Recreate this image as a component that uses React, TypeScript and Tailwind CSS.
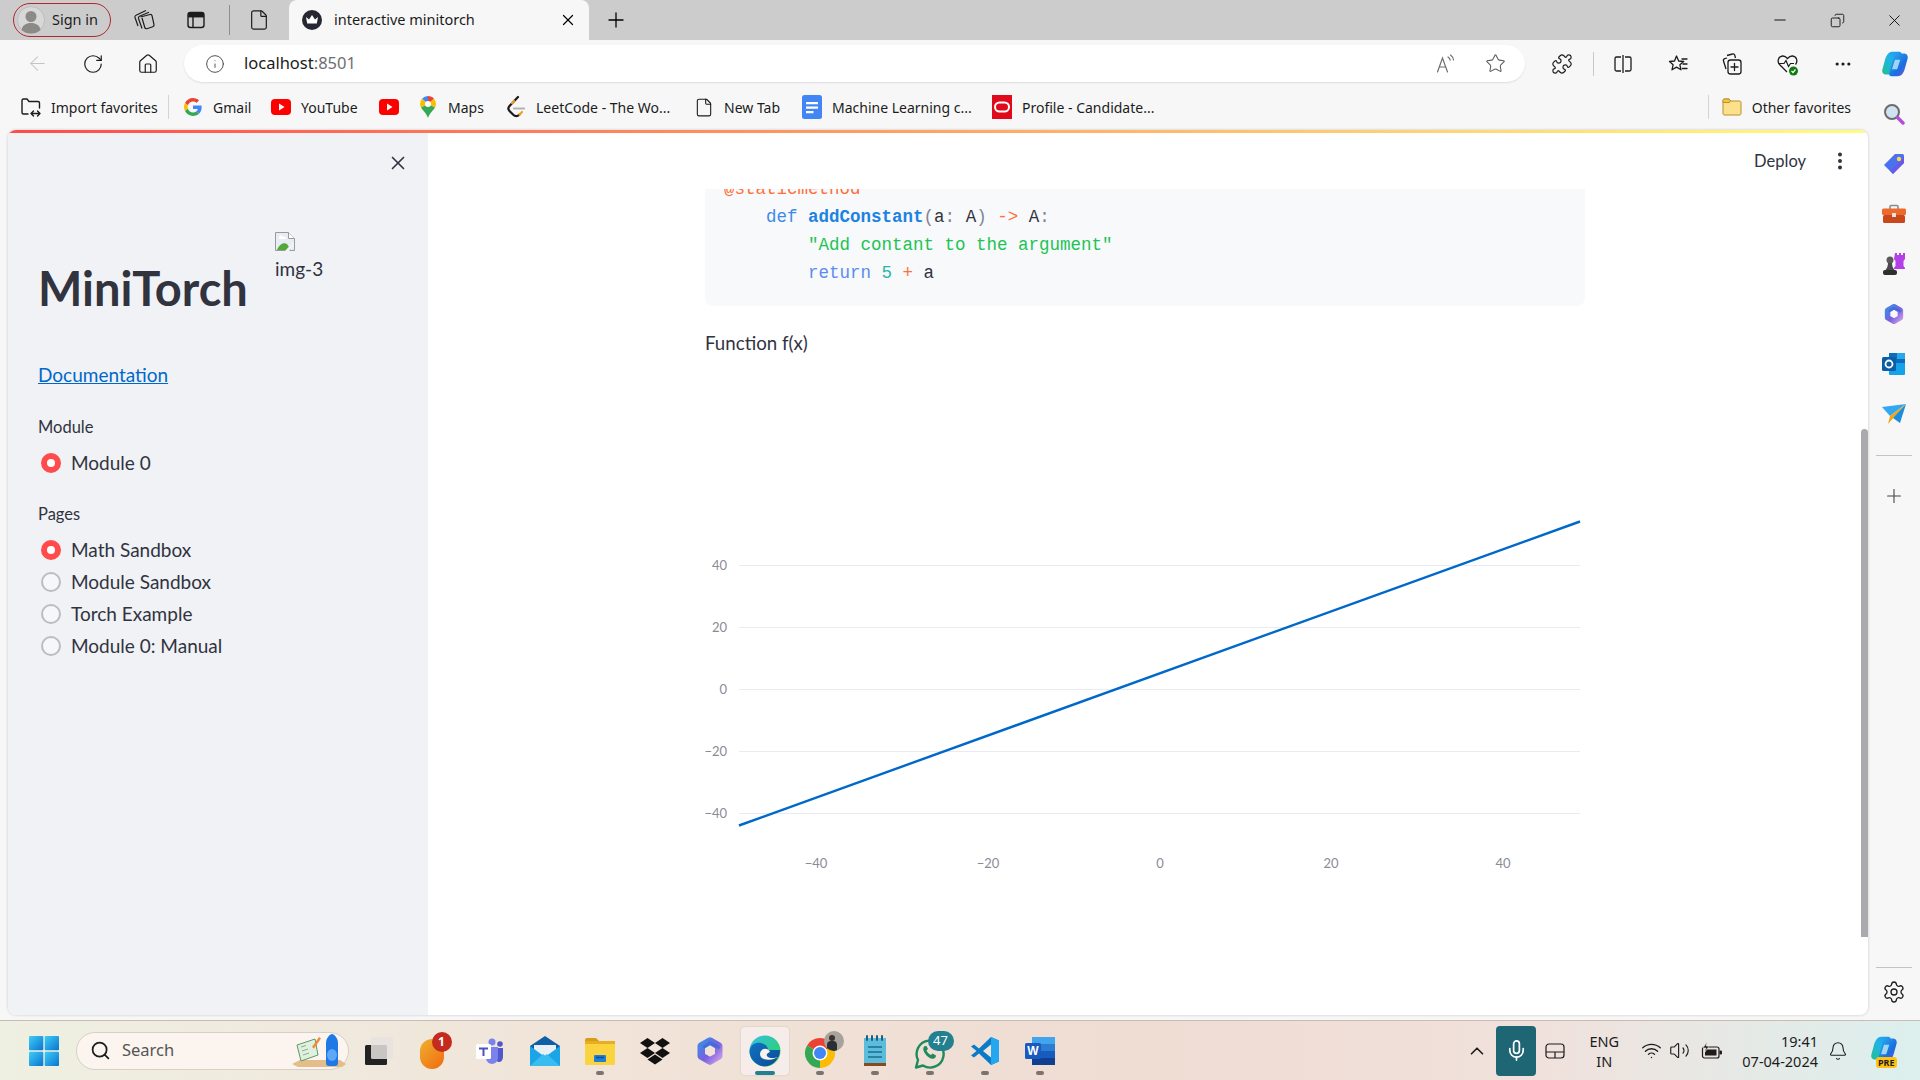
import {
  ArrowLeft,
  Bell,
  ChevronUp,
  Copy,
  Ellipsis,
  EllipsisVertical,
  File,
  Home,
  Info,
  Mic,
  Minus,
  Plus,
  Puzzle,
  RotateCw,
  Search,
  Settings,
  Star,
  Volume2,
  Wifi,
  X,
} from "lucide-react";

// ---- small logos, drawn by hand ----
function Google() {
  return (
    <svg width="18" height="18" viewBox="0 0 48 48">
      <path fill="#EA4335" d="M24 9.5c3.5 0 6.7 1.2 9.2 3.6l6.9-6.9C35.9 2.4 30.5 0 24 0 14.6 0 6.5 5.4 2.6 13.2l8 6.2C12.5 13.7 17.800 9.500 24 9.500z" />
      <path fill="#4285F4" d="M47 24.500c0-1.600-.1-3.100-.4-4.500H24v9h12.900c-.6 3-2.200 5.500-4.700 7.200l7.700 6c4.500-4.200 7.100-10.300 7.100-17.700z" />
      <path fill="#FBBC05" d="M10.500 28.600c-.5-1.500-.8-3-.8-4.600s.3-3.100.8-4.600l-8-6.200C.9 16.500 0 20.100 0 24s.9 7.500 2.600 10.800l7.900-6.200z" />
      <path fill="#34A853" d="M24 48c6.500 0 11.900-2.100 15.900-5.800l-7.700-6c-2.100 1.400-4.900 2.300-8.200 2.300-6.200 0-11.500-4.200-13.400-9.900l-8 6.200C6.500 42.600 14.600 48 24 48z" />
    </svg>
  );
}

function YouTube() {
  return (
    <svg width="20" height="16" viewBox="0 0 20 16">
      <rect width="20" height="16" rx="4" fill="#f00" />
      <path d="M8 4.500 13.500 8 8 11.500z" fill="#fff" />
    </svg>
  );
}

function MapsPin() {
  return (
    <svg width="16" height="22" viewBox="0 0 16 22">
      <path d="M8 0a8 8 0 0 0-6 2.700L8 8z" fill="#4285F4" />
      <path d="M8 0c2.400 0 4.600 1.100 6 2.700L8 8z" fill="#EA4335" />
      <path d="M14 2.700A8 8 0 0 1 16 8c0 1.400-.5 2.600-1 3.600L8 8z" fill="#FBBC05" />
      <path d="M2 2.700A8 8 0 0 0 0 8c0 1.400.5 2.600 1 3.600L8 8z" fill="#FBBC05" />
      <path d="M1 11.600c1.600 3 5.500 5.500 7 10.400 1.500-4.900 5.400-7.400 7-10.400L8 8z" fill="#34A853" />
      <circle cx="8" cy="8" r="3" fill="#fff" />
    </svg>
  );
}

function LeetCode() {
  return (
    <svg width="20" height="24" viewBox="0 0 20 24" fill="none">
      <path d="M12 2 3.500 11c-1.500 1.700-1.500 3.500 0 5l3.500 3.500c2 2 4.500 2 6.500 0" stroke="#1a1a1a" strokeWidth="2.200" strokeLinecap="round" />
      <path d="M8 13.500h10" stroke="#b3b3b3" strokeWidth="2.200" strokeLinecap="round" />
      <path d="M13.500 19.500 16 17M6 8l2-2" stroke="#f89f1b" strokeWidth="2.200" strokeLinecap="round" />
    </svg>
  );
}

function Docs() {
  return (
    <svg width="20" height="24" viewBox="0 0 20 24">
      <rect width="20" height="24" rx="2.500" fill="#4285F4" />
      <path d="M4 7h12v2.200H4zM4 11.500h12v2.200H4zM4 16h7.500v2.200H4z" fill="#fff" />
    </svg>
  );
}

function Oracle() {
  return (
    <svg width="20" height="24" viewBox="0 0 20 24">
      <rect width="20" height="24" fill="#df0a1c" />
      <rect x="3" y="7.500" width="14" height="9" rx="4.500" fill="none" stroke="#fff" strokeWidth="2" />
    </svg>
  );
}

function FolderYellow({ size = 20 }: { size?: number }) {
  return (
    <svg width={size} height={size} viewBox="0 0 20 20">
      <path d="M1 3.500A1.500 1.500 0 0 1 2.500 2H7l2 2h8.500A1.500 1.500 0 0 1 19 5.500v11a1.500 1.500 0 0 1-1.500 1.500h-15A1.500 1.500 0 0 1 1 16.500z" fill="#fde08a" stroke="#b8912d" strokeWidth="1" />
      <path d="M1 3.500A1.500 1.500 0 0 1 2.500 2H7l1.500 2-1 1.500H1z" fill="#f2c744" stroke="#b8912d" strokeWidth="1" />
    </svg>
  );
}

function ImportFav() {
  return (
    <svg width="22" height="22" viewBox="0 0 22 22" fill="none" stroke="#1c1c1c" strokeWidth="1.400" strokeLinecap="round" strokeLinejoin="round">
      <path d="M8 18H3.500A1.500 1.500 0 0 1 2 16.500v-12A1.500 1.500 0 0 1 3.500 3H7l2 2.500h9A1.500 1.500 0 0 1 19.500 7v5" />
      <path d="M11 17.500h9M13.500 15 11 17.500l2.500 2.500M17.500 15l2.500 2.500-2.500 2.500" />
    </svg>
  );
}

function Copilot({ id, size = 28 }: { id: string; size?: number }) {
  return (
    <svg width={size} height={size} viewBox="0 0 32 32">
      <defs>
        <linearGradient id={`${id}a`} x1="0" y1="1" x2="1" y2="0">
          <stop offset="0" stopColor="#1fbf8f" />
          <stop offset="0.55" stopColor="#21b4e8" />
          <stop offset="1" stopColor="#1e90f0" />
        </linearGradient>
        <linearGradient id={`${id}b`} x1="0" y1="0" x2="1" y2="1">
          <stop offset="0" stopColor="#2ab5f2" />
          <stop offset="0.6" stopColor="#1a6fe0" />
          <stop offset="1" stopColor="#7a4fe0" />
        </linearGradient>
      </defs>
      <path d="M13 2h8c2 0 2.800 1.500 2.300 3.500L19 22c-.8 3-3 6-6 6H6c-3.500 0-5-2.500-4.500-5.500l2.500-9C5.500 7 8 2 13 2z" fill={`url(#${id}a)`} />
      <path d="M19 4h7c3.500 0 5 2.500 4.500 5.500l-2.500 9c-1.500 6.500-4 11.500-9 11.500h-7c-2 0-3-1.500-2.500-3.500L14 10c.8-3 2-6 5-6z" fill={`url(#${id}b)`} />
      <path d="M16 11h6l-3.500 11h-6z" fill="#c8f2fa" opacity="0.75" />
    </svg>
  );
}

function SplitScreen() {
  return (
    <svg width="20" height="20" viewBox="0 0 20 20" fill="none" stroke="#1c1c1c" strokeWidth="1.300">
      <path d="M8 3H3.500A1.500 1.500 0 0 0 2 4.500v11A1.500 1.500 0 0 0 3.500 17H8M12 3h4.500A1.500 1.500 0 0 1 18 4.500v11a1.500 1.500 0 0 1-1.500 1.500H12M10 1v18" />
    </svg>
  );
}

function FavStar() {
  return (
    <svg width="22" height="22" viewBox="0 0 22 22" fill="none" stroke="#1c1c1c" strokeWidth="1.300" strokeLinejoin="round">
      <path d="M9.500 3 11.700 8l5 .5-3.800 3.300 1.100 5-4.500-2.700-4.500 2.700 1.100-5L2.500 8.500l5-.5z" />
      <path d="M15 6h5M16 11h4M15.500 15.500H20" strokeLinecap="round" />
    </svg>
  );
}

function CollectionsIcon() {
  return (
    <svg width="22" height="24" viewBox="0 0 22 24" fill="none" stroke="#1c1c1c" strokeWidth="1.300" strokeLinejoin="round">
      <path d="M6 3.500 11.500 2c1-.3 2 .3 2.300 1.300L14.500 6M5 17 2.500 9c-.3-1 .3-2 1.300-2.300L6 6" />
      <rect x="7" y="8" width="13" height="14" rx="2.500" />
      <path d="M13.500 11.500v7M10 15h7" strokeLinecap="round" />
    </svg>
  );
}

function HealthHeart() {
  return (
    <svg width="24" height="24" viewBox="0 0 24 24" fill="none">
      <path d="M11 20 3.500 12.500C1 9.500 2 4.500 6.500 4c2-.2 3.500.8 5 2.500C13 4.800 14.500 3.800 16.500 4c4.500.5 5.500 5.500 3 8.500" stroke="#1c1c1c" strokeWidth="1.300" />
      <path d="M2.500 11.500H8l2-3 2.500 6 2-3H18" stroke="#1c1c1c" strokeWidth="1.200" />
      <circle cx="17.500" cy="19" r="4.500" fill="#107c10" />
      <path d="m15.500 19 1.500 1.500 2.500-3" stroke="#fff" strokeWidth="1.200" />
    </svg>
  );
}

function ReadAloud() {
  return (
    <svg width="22" height="22" viewBox="0 0 22 22" fill="none" stroke="#6f6f6f" strokeWidth="1.200" strokeLinecap="round">
      <path d="m2.500 19 5-14 5 14M4.500 14h6" />
      <path d="M13 4c1.500 1 2 2 2.200 3.200M15.500 2c2 1.500 2.800 3 3 5" />
    </svg>
  );
}

function Crown() {
  return (
    <svg width="20" height="20" viewBox="0 0 20 20">
      <circle cx="10" cy="10" r="10" fill="#262730" />
      <path d="m4 7 3 2.500L10 5l3 4.500L16 7l-1.200 6.500H5.200z" fill="#fff" />
    </svg>
  );
}

function Avatar() {
  return (
    <svg width="28" height="28" viewBox="0 0 28 28">
      <circle cx="14" cy="14" r="13.500" fill="#d8d8d8" stroke="#bdbdbd" />
      <circle cx="14" cy="10.500" r="5.500" fill="#8c8a87" />
      <path d="M4.500 24c1-5 4.500-7 9.500-7s8.500 2 9.500 7c-2.500 2.500-6 3.500-9.500 3.500S7 26.500 4.500 24z" fill="#8c8a87" />
    </svg>
  );
}

function Workspaces() {
  return (
    <svg width="24" height="24" viewBox="0 0 24 24" fill="none" stroke="#1c1c1c" strokeWidth="1.200" strokeLinejoin="round">
      <path d="M9.500 9 19 6.500c1-.2 1.800.3 2 1.200l2 9c.2 1-.3 1.800-1.200 2l-6 2c-1 .2-1.800-.3-2-1.200L11 10" transform="translate(-1 0)" />
      <path d="M6 18 3 9.500c-.3-1 .1-1.800 1-2.200l10-4.800" />
      <path d="M10 20.500 6.500 10.500c-.3-1 .1-1.800 1-2.200l9.500-4" />
    </svg>
  );
}

function TabLayout() {
  return (
    <svg width="20" height="20" viewBox="0 0 20 20" fill="none" stroke="#1c1c1c" strokeWidth="1.400">
      <rect x="2" y="2.500" width="16" height="15" rx="2.500" />
      <path d="M2 6.500h16M7 6.500v11" />
      <path d="M3 3.500h14v3H3z" fill="#1c1c1c" />
    </svg>
  );
}

// ---- edge side panel ----
function MagnifierColor() {
  return (
    <svg width="22" height="22" viewBox="0 0 22 22">
      <circle cx="9" cy="9" r="7" fill="#cfe3f2" stroke="#6c6c6c" strokeWidth="2" />
      <path d="m14.500 14.500 5.500 5.500" stroke="#b14fd8" strokeWidth="3.400" strokeLinecap="round" />
    </svg>
  );
}

function PriceTag() {
  return (
    <svg width="22" height="22" viewBox="0 0 22 22">
      <path d="M12 1h7.500A1.500 1.500 0 0 1 21 2.500V10L10 21 1 12z" fill="#4a72ee" />
      <path d="M21 10 10 21l-3-3L21 4z" fill="#7a4be6" opacity="0.6" />
      <circle cx="16" cy="6" r="2.200" fill="#ffd34d" />
    </svg>
  );
}

function Toolbox() {
  return (
    <svg width="24" height="20" viewBox="0 0 24 20">
      <path d="M8 5V2.500A1 1 0 0 1 9 1.500h6a1 1 0 0 1 1 1V5" fill="none" stroke="#8a8a8a" strokeWidth="1.600" />
      <rect y="4.500" width="24" height="6.500" rx="1.500" fill="#ec6a2c" />
      <rect x="1" y="11" width="22" height="8" rx="1.500" fill="#c9481b" />
      <rect x="10" y="9" width="4" height="4" rx="0.500" fill="#e6e6e6" />
    </svg>
  );
}

function Chess() {
  return (
    <svg width="24" height="24" viewBox="0 0 24 24">
      <path d="M14 1h2v2h2V1h2v2h2V1h2v6l-1.500 2v5l1.500 2v1H13v-1l1.500-2V9L13 7z" transform="translate(-1 0)" fill="#b43fe6" />
      <circle cx="8" cy="8" r="3.500" fill="#5b5b5b" />
      <path d="M6 11h4c0 3 1 5 2.500 7h-9C5 16 6 14 6 11z" fill="#4a4a4a" />
      <rect x="1" y="18" width="14" height="5" rx="2" fill="#2f2f2f" />
    </svg>
  );
}

function M365({ size = 22 }: { size?: number }) {
  return (
    <svg width={size} height={size} viewBox="0 0 24 24" fill="none">
      <defs>
        <linearGradient id={`m365${size}`} x1="0" y1="0" x2="1" y2="1">
          <stop offset="0" stopColor="#3f8ae6" />
          <stop offset="0.55" stopColor="#7a5fe0" />
          <stop offset="1" stopColor="#c59ae8" />
        </linearGradient>
      </defs>
      <path d="M12 4 19 8v8l-7 4-7-4V8z" stroke={`url(#m365${size})`} strokeWidth="6" strokeLinejoin="round" />
      <path d="M7.500 8.500 12 5.500l7 3.500" stroke="#2f6fd8" strokeWidth="2.500" strokeLinecap="round" opacity="0.7" />
    </svg>
  );
}

function Outlook() {
  return (
    <svg width="24" height="24" viewBox="0 0 24 24">
      <rect x="7" y="1" width="16" height="11" fill="#0f6cbd" />
      <rect x="15" y="1" width="8" height="6" fill="#28a8ea" />
      <path d="M7 11h16v11a1 1 0 0 1-1 1H8a1 1 0 0 1-1-1z" fill="#14a3e8" />
      <rect y="5" width="14" height="14" rx="1.500" fill="#0a5ea8" />
      <circle cx="7" cy="12" r="3.500" fill="none" stroke="#fff" strokeWidth="1.800" />
    </svg>
  );
}

function SendPlane() {
  return (
    <svg width="24" height="20" viewBox="0 0 24 20">
      <path d="M0 3 24 0 8 12z" fill="#33a7f0" />
      <path d="M24 0 8 12 6 20z" fill="#f3a712" />
      <path d="M24 0 18 19l-7-5z" fill="#1b8de0" />
    </svg>
  );
}

// ---- taskbar icons ----
function StartLogo() {
  return (
    <svg width="30" height="30" viewBox="0 0 30 30">
      <defs>
        <linearGradient id="win" x1="0" y1="0" x2="1" y2="1">
          <stop offset="0" stopColor="#3fcdf7" />
          <stop offset="1" stopColor="#0a74cf" />
        </linearGradient>
      </defs>
      <rect width="14.300" height="14.300" rx="1" fill="url(#win)" />
      <rect x="15.700" width="14.300" height="14.300" rx="1" fill="url(#win)" />
      <rect y="15.700" width="14.300" height="14.300" rx="1" fill="url(#win)" />
      <rect x="15.700" y="15.700" width="14.300" height="14.300" rx="1" fill="url(#win)" />
    </svg>
  );
}

function SearchArt() {
  return (
    <svg width="58" height="36" viewBox="0 0 58 36">
      <path d="M2 31 10 27h40l6 4-4 3H8z" fill="#e3bd8a" />
      <path d="M7 12 25 6l3 16-17 6z" fill="#dff0dc" stroke="#5b9a6a" strokeWidth="1" />
      <path d="M11 14l5-1.500M12 18l6-2M13 22l6-2" stroke="#7a9a8a" strokeWidth="0.800" />
      <path d="m22 14 7-10 2 1.500-7 10z" fill="#f08a3c" />
      <path d="M36 10c0-5 4-9 6-9s6 4 6 9v20c0 2-1 3-3 3h-6c-2 0-3-1-3-3z" fill="#1e78e6" />
      <ellipse cx="42" cy="22" rx="5" ry="6" fill="#5ea8f5" />
    </svg>
  );
}

function TaskView() {
  return (
    <svg width="30" height="30" viewBox="0 0 30 30">
      <rect x="2" y="9" width="22" height="20" rx="1.500" fill="#222" />
      <rect x="8" y="1" width="22" height="22" rx="1.500" fill="#e6e2de" opacity="0.85" />
    </svg>
  );
}

function OrangeBadge() {
  return (
    <div className="relative flex h-[36px] w-[30px] items-end">
      <div className="h-[30px] w-[24px] rounded-full bg-[linear-gradient(135deg,#f0b030,#f06a10)]" />
      <span className="absolute -top-[1px] left-[12px] flex h-[20px] w-[20px] items-center justify-center rounded-full bg-[#c42b1c] text-[12px] font-bold text-white">
        1
      </span>
    </div>
  );
}

function Teams() {
  return (
    <svg width="28" height="26" viewBox="0 0 28 26">
      <circle cx="16" cy="4" r="3.500" fill="#7b83eb" />
      <circle cx="24" cy="6" r="2.800" fill="#5059c9" />
      <path d="M19 10h8v9c0 3-2 5-4 5s-4-2-4-5z" fill="#5059c9" />
      <path d="M10 9h12v11c0 3-3 6-6 6s-6-3-6-6z" fill="#7b83eb" />
      <rect y="6" width="15" height="15" rx="1.500" fill="#fff" />
      <path d="M3 9.500h9v2H8.500V18h-2v-6.500H3z" fill="#4b53bc" />
    </svg>
  );
}

function Mail() {
  return (
    <svg width="32" height="32" viewBox="0 0 32 32">
      <path d="M1 11 16 1l15 10v6H1z" fill="#0f5fa8" />
      <path d="M5 10h22v10H5z" fill="#e8f0f5" />
      <path d="M1 11v20h30V11L16 22z" fill="#1ca5e6" />
      <path d="M1 31 14 19l2 1.500 2-1.500 13 12z" fill="#39bdf0" />
    </svg>
  );
}

function Explorer() {
  return (
    <svg width="32" height="32" viewBox="0 0 32 32">
      <path d="M1 5a2 2 0 0 1 2-2h9l3 3h-14z" fill="#d79c1a" />
      <rect x="1" y="6" width="30" height="24" rx="1.500" fill="#fbd33f" />
      <rect x="1" y="6" width="30" height="3" fill="#e7ae1f" />
      <rect x="10" y="20" width="12" height="7" rx="1" fill="#1f7fd6" />
      <path d="M12 22.500h8" stroke="#0b4f91" strokeWidth="1.500" />
    </svg>
  );
}

function Dropbox() {
  return (
    <svg width="30" height="28" viewBox="0 0 30 28" fill="#111">
      <path d="M7.500 1 15 6 7.500 11 0 6z" />
      <path d="M22.500 1 30 6l-7.500 5L15 6z" />
      <path d="M7.500 11 15 16l-7.500 5L0 16z" />
      <path d="M22.500 11 30 16l-7.500 5L15 16z" />
      <path d="m15 17.500 7.500 5L15 27.500l-7.500-5z" />
    </svg>
  );
}

function Edge() {
  return (
    <svg width="32" height="32" viewBox="0 0 32 32">
      <defs>
        <linearGradient id="edge1" x1="0" y1="0" x2="1" y2="1">
          <stop offset="0" stopColor="#33c0e6" />
          <stop offset="0.7" stopColor="#2ecf7d" />
          <stop offset="1" stopColor="#7ae05a" />
        </linearGradient>
        <linearGradient id="edge2" x1="0" y1="0" x2="1" y2="1">
          <stop offset="0" stopColor="#1273c4" />
          <stop offset="1" stopColor="#0b4a93" />
        </linearGradient>
      </defs>
      <circle cx="16" cy="16" r="15.500" fill="url(#edge1)" />
      <path d="M.5 16C2 8 8 7 12 8c6 1.500 7 5 7 7h12c0 4-1 7-3 9-4 7-13 9-18 6C4 27 .5 22 .5 16z" fill="url(#edge2)" />
      <path d="M21 17c-2-5-10-4-10 2 0 6 9 8 18 3-3 1-9 2-11-1-1-2 1-3 3-4z" fill="#f5f2ef" />
    </svg>
  );
}

function Chrome() {
  return (
    <div className="relative ml-[8px] h-[36px] w-[40px]">
      <svg className="absolute bottom-0 left-0" width="32" height="32" viewBox="0 0 32 32">
        <path d="M16 16 3 8.500A15 15 0 0 1 29 8.500z" fill="#ea4335" />
        <path d="M16 16 29 8.500A15 15 0 0 1 16 31z" fill="#fbbc05" />
        <path d="M16 16 16 31A15 15 0 0 1 3 8.500z" fill="#34a853" />
        <circle cx="16" cy="16" r="7.500" fill="#fff" />
        <circle cx="16" cy="16" r="6" fill="#4285f4" />
      </svg>
      <div className="absolute -top-[2px] right-0 h-[20px] w-[20px] overflow-hidden rounded-full bg-[#a8a29c]">
        <div className="ml-[5px] mt-[4px] h-[6px] w-[6px] rounded-full bg-[#3a3330]" />
        <div className="ml-[3px] h-[12px] w-[10px] rounded-t bg-[#2b2e33]" />
      </div>
    </div>
  );
}

function Notepad() {
  return (
    <svg width="24" height="32" viewBox="0 0 24 32">
      <rect x="1" y="3" width="22" height="27" fill="#5cbcdc" />
      <rect x="1" y="28" width="22" height="3" fill="#8a4a1e" />
      <path d="M4 1v4M9 1v4M14 1v4M19 1v4" stroke="#1d5f80" strokeWidth="2" strokeLinecap="round" />
      <path d="M5 12h14M5 17h14M5 22h14" stroke="#1d6d8e" strokeWidth="1.600" />
    </svg>
  );
}

function WhatsApp() {
  return (
    <div className="relative ml-[8px] h-[36px] w-[40px]">
      <svg className="absolute bottom-0 left-0" width="32" height="32" viewBox="0 0 32 32" fill="none">
        <path d="M2 30.500 4 23A13.500 13.500 0 1 1 9 28.500z" stroke="#1f8a5b" strokeWidth="2.400" strokeLinejoin="round" />
        <path d="M11 9c-2 1-2.500 3.500 0 7.500 2.500 4 6.500 6 9 5 1.500-.5 2-2 2-3l-3.500-2-1.500 1.500c-2-.8-3.500-2.500-4.500-4.500l1.500-1.500L12.500 9z" fill="#1f8a5b" />
      </svg>
      <span className="absolute -top-[2px] left-[14px] flex h-[20px] w-[26px] items-center justify-center rounded-full bg-[#22808f] text-[13px] text-white">
        47
      </span>
    </div>
  );
}

function VSCode() {
  return (
    <svg width="30" height="30" viewBox="0 0 30 30">
      <path d="M21 1 29 4.500v21L21 29 9 17.500l-5 4-3-2L6.500 15 1 10.500l3-2 5 4z" fill="#0a7cc7" />
      <path d="M21 1 29 4.500v21L21 29z" fill="#22a7f0" />
      <path d="M21 8.500 13 15l8 6.500z" fill="#f0e5dd" />
    </svg>
  );
}

function Word() {
  return (
    <svg width="30" height="28" viewBox="0 0 30 28">
      <rect x="7" width="23" height="7" fill="#41a5ee" />
      <rect x="7" y="7" width="23" height="7" fill="#2b7cd3" />
      <rect x="7" y="14" width="23" height="7" fill="#185abd" />
      <rect x="7" y="21" width="23" height="7" fill="#103f91" />
      <rect y="6" width="16" height="16" rx="1.500" fill="#185abd" />
      <text x="8" y="18" textAnchor="middle" fontSize="12" fontWeight="700" fill="#fff" fontFamily="'Liberation Sans',sans-serif">W</text>
    </svg>
  );
}

function TouchKeyboard() {
  return (
    <svg width="20" height="16" viewBox="0 0 20 16" fill="none" stroke="#1c1c1c" strokeWidth="1.200">
      <rect x="1" y="1" width="18" height="14" rx="3" />
      <path d="M1 9h18M10 9v6" />
    </svg>
  );
}

function Battery() {
  return (
    <svg width="22" height="18" viewBox="0 0 22 18">
      <rect x="1.500" y="5" width="16.500" height="11" rx="2" fill="#eee1da" stroke="#1c1c1c" strokeWidth="1.200" />
      <rect x="4" y="7.500" width="11.500" height="6" fill="#1c1c1c" />
      <rect x="18.500" y="8.500" width="2.500" height="4" rx="1" fill="#1c1c1c" />
      <path d="M6 0 2 6h3l-1 4 4-6H5z" fill="#1c1c1c" stroke="#efe3dc" strokeWidth="0.600" />
    </svg>
  );
}

function BrokenImage() {
  return (
    <svg width="20" height="19" viewBox="0 0 20 19">
      <path d="M.5.500h13l6 6v12H.500z" fill="#e8edf5" stroke="#9a9a9a" />
      <path d="M13.500.500v6h6" fill="#fff" stroke="#9a9a9a" />
      <path d="M2 18c2-5 6-8 10-6l4 6z" fill="#55a838" />
      <path d="M4 6a2 2 0 0 1 4-1 2 2 0 0 1 3 2H4z" fill="#fff" />
      <path d="m19 9-9 10h4l5-5z" fill="#f0f2f6" />
    </svg>
  );
}

// ---- streamlit bits ----
function Radio({ label, checked }: { label: string; checked?: boolean }) {
  return (
    <div className="flex h-[32px] items-center">
      <span className="ml-[3px] mr-[10px] flex h-[20px] w-[20px] items-center justify-center">
        {checked ? (
          <span className="h-[20px] w-[20px] rounded-full border-[6px] border-[#ff4b4b] bg-white" />
        ) : (
          <span className="h-[20px] w-[20px] rounded-full border-2 border-[#bcbcc2] bg-[#f6f7fa]" />
        )}
      </span>
      <span className="text-[19px] text-[#31333f]">{label}</span>
    </div>
  );
}

const favorites = [
  { icon: <Google />, label: "Gmail", width: "w-[88px]" },
  { icon: <YouTube />, label: "YouTube", width: "w-[108px]" },
  { icon: <YouTube />, label: "", width: "w-[39px]" },
  { icon: <MapsPin />, label: "Maps", width: "w-[88px]" },
  { icon: <LeetCode />, label: "LeetCode - The Wo...", width: "w-[188px]" },
  { icon: <File size={21} strokeWidth={1.3} color="#1c1c1c" />, label: "New Tab", width: "w-[108px]" },
  { icon: <Docs />, label: "Machine Learning c...", width: "w-[190px]" },
  { icon: <Oracle />, label: "Profile - Candidate...", width: "w-[180px]" },
];

const taskbarApps = [
  { icon: <OrangeBadge />, pip: false },
  { icon: <Teams />, pip: false },
  { icon: <Mail />, pip: false },
  { icon: <Explorer />, pip: true },
  { icon: <Dropbox />, pip: false },
  { icon: <M365 size={30} />, pip: false },
];

const pinnedApps = [
  { icon: <Chrome /> },
  { icon: <Notepad /> },
  { icon: <WhatsApp /> },
  { icon: <VSCode /> },
  { icon: <Word /> },
];

const yTicks = [
  { y: 564.5, label: "40" },
  { y: 626.5, label: "20" },
  { y: 688.5, label: "0" },
  { y: 750.5, label: "−20" },
  { y: 812.5, label: "−40" },
];

const xTicks = [
  { x: 816, label: "−40" },
  { x: 988, label: "−20" },
  { x: 1160, label: "0" },
  { x: 1331, label: "20" },
  { x: 1503, label: "40" },
];

function Chart() {
  return (
    <svg className="mt-[14px] block" width="880" height="530" viewBox="705 370 880 530">
      {yTicks.map((t) => (
        <g key={t.label}>
          <line x1="739" x2="1580" y1={t.y} y2={t.y} stroke="#e8ebf2" strokeWidth="1" />
          <text x="727" y={t.y + 4.500} textAnchor="end" fontSize="13" fill="#8b8b97">
            {t.label}
          </text>
        </g>
      ))}
      {xTicks.map((t) => (
        <text key={t.label} x={t.x} y="867" textAnchor="middle" fontSize="13" fill="#8b8b97">
          {t.label}
        </text>
      ))}
      <line x1="739" y1="824.500" x2="1580" y2="520.500" stroke="#0068c9" strokeWidth="2.400" />
    </svg>
  );
}

export default function App() {
  return (
    <div className="flex h-[1080px] w-[1920px] flex-col overflow-hidden bg-[#f7f7f7] font-['Noto_Sans',sans-serif] text-black">
      {/* tab strip */}
      <div className="flex h-10 shrink-0 items-center bg-[#cccccc]">
        <div className="ml-[13px] flex h-[34px] w-[98px] items-center gap-[7px] rounded-full border border-[#b0282d] pl-[3px] text-[14.500px] text-[#1c1c1c]">
          <Avatar />
          Sign in
        </div>
        <div className="ml-[21px] flex w-[24px] justify-center"><Workspaces /></div>
        <div className="ml-[29px] flex w-[22px] justify-center"><TabLayout /></div>
        <div className="ml-[22px] h-[30px] w-px bg-[#8f8f8f]" />
        <div className="ml-[18px] flex w-[22px] justify-center"><File size={22} strokeWidth={1.3} color="#1c1c1c" /></div>
        <div className="ml-[19px] flex h-full w-[300px] items-center rounded-t-lg bg-[#f7f7f7] pl-[13px] pr-[12px] text-[14.500px]">
          <Crown />
          <span className="ml-[12px] flex-1 text-[#1c1c1c]">interactive minitorch</span>
          <X size={18} strokeWidth={1.6} />
        </div>
        <div className="ml-[15px]"><Plus size={24} strokeWidth={1.3} /></div>
        <div className="ml-auto flex items-center">
          <div className="flex w-[52px] justify-center"><Minus size={18} strokeWidth={1.2} /></div>
          <div className="flex w-[62px] justify-center"><Copy size={15} strokeWidth={1.3} className="-scale-x-100" /></div>
          <div className="flex w-[52px] justify-center"><X size={19} strokeWidth={1.1} /></div>
        </div>
      </div>

      {/* toolbar */}
      <div className="flex h-[44px] shrink-0 items-center pt-[3px]">
        <div className="flex w-[74px] justify-center"><ArrowLeft size={23} strokeWidth={1.1} color="#c4c4c4" /></div>
        <div className="flex w-[38px] justify-center"><RotateCw size={22} strokeWidth={1.3} color="#1c1c1c" /></div>
        <div className="ml-[17px] flex w-[38px] justify-center"><Home size={22} strokeWidth={1.3} color="#1c1c1c" /></div>
        <div className="ml-[17px] flex h-[37px] w-[1341px] items-center rounded-full bg-white pl-[21px] pr-[19px] shadow-[0_1px_2px_rgba(0,0,0,0.1)]">
          <Info size={20} strokeWidth={1.1} color="#444" />
          <span className="ml-[19px] flex-1 text-[16.500px] text-[#1c1c1c]">
            localhost<span className="text-[#6f6f6f]">:8501</span>
          </span>
          <ReadAloud />
          <div className="ml-[28px]"><Star size={21} strokeWidth={1.2} color="#5c5c5c" /></div>
        </div>
        <div className="ml-[25px] flex w-[24px] justify-center"><Puzzle size={22} strokeWidth={1.3} color="#1c1c1c" /></div>
        <div className="ml-[19px] h-[24px] w-px bg-[#c8c8c8]" />
        <div className="ml-[18px] flex w-[22px] justify-center"><SplitScreen /></div>
        <div className="ml-[33px] flex w-[22px] justify-center"><FavStar /></div>
        <div className="ml-[32px] flex w-[22px] justify-center"><CollectionsIcon /></div>
        <div className="ml-[33px] flex w-[24px] justify-center"><HealthHeart /></div>
        <div className="ml-[32px] flex w-[22px] justify-center"><Ellipsis size={20} strokeWidth={1.8} color="#1c1c1c" /></div>
        <div className="ml-[27px]"><Copilot id="cpa" /></div>
      </div>

      {/* everything under the toolbar */}
      <div className="flex min-h-0 flex-1">
        <div className="flex w-[1868px] flex-col">
          {/* favorites bar */}
          <div className="flex h-[46px] shrink-0 items-center text-[14px] text-[#1c1c1c]">
            <div className="ml-[20px] flex w-[148px] items-center gap-[9px]">
              <ImportFav />
              Import favorites
            </div>
            <div className="h-[24px] w-px bg-[#d4d4d4]" />
            <div className="ml-[14px] flex min-w-0 flex-1 items-center">
              {favorites.map((f, i) => (
                <div key={i} className={`flex items-center gap-[10px] ${f.width}`}>
                  <span className="flex w-[20px] justify-center">{f.icon}</span>
                  {f.label && <span className="whitespace-nowrap">{f.label}</span>}
                </div>
              ))}
            </div>
            <div className="h-[24px] w-px bg-[#d4d4d4]" />
            <div className="ml-[13px] mr-[17px] flex items-center gap-[10px]">
              <FolderYellow />
              Other favorites
            </div>
          </div>

          {/* page */}
          <div className="relative ml-2 flex min-h-0 flex-1 flex-col overflow-hidden rounded-t-lg rounded-b-lg bg-white font-['Lato',sans-serif] text-[#31333f] shadow-[0_0_3px_rgba(0,0,0,0.2)]">
            <div className="h-[3px] shrink-0 bg-[linear-gradient(90deg,#ff4b4b,#fffd80)]" />
            <div className="flex min-h-0 flex-1">
              <aside className="w-[420px] shrink-0 bg-[#f0f2f6] pl-[30px]">
                <div className="flex h-[58px] items-center justify-end pr-[19px] pt-[2px]">
                  <X size={22} strokeWidth={1.8} color="#31333f" />
                </div>
                <div className="mt-[41px] flex h-[88px] items-start">
                  <h1 className="mt-[24px] w-[237px] text-[47px] font-bold leading-[64px]">MiniTorch</h1>
                  <div className="text-[19px] leading-[28px]">
                    <BrokenImage />
                    <div className="mt-[4px]">img-3</div>
                  </div>
                </div>
                <a className="mt-[41px] block text-[19px] leading-[28px] text-[#0068c9] underline">Documentation</a>
                <div className="mt-[26px] text-[16.500px] leading-[24px]">Module</div>
                <div className="mt-[8px]"><Radio label="Module 0" checked /></div>
                <div className="mt-[23px] text-[16.500px] leading-[24px]">Pages</div>
                <div className="mt-[8px]">
                  <Radio label="Math Sandbox" checked />
                  <Radio label="Module Sandbox" />
                  <Radio label="Torch Example" />
                  <Radio label="Module 0: Manual" />
                </div>
              </aside>
              <main className="min-w-0 flex-1 pl-[277px]">
                <div className="flex h-[56px] items-center justify-end pr-[17px] text-[16.500px]">
                  <span className="mr-[23px]">Deploy</span>
                  <EllipsisVertical size={22} strokeWidth={2.4} className="mb-[1px]" />
                </div>
                <div className="h-[117px] w-[880px] overflow-hidden rounded-b-lg bg-[#f8f9fb] pl-[19px] font-['Liberation_Mono',monospace] text-[17.500px] leading-[28px]">
                  <div className="-mt-[14px] whitespace-pre">
                    <div className="text-[#ff6f3c]">@staticmethod</div>
                    <div>
                      {"    "}
                      <span className="text-[#3f8ae8]">def</span> <span className="font-bold text-[#1c83e1]">addConstant</span>
                      <span className="text-[#808495]">(</span>a<span className="text-[#808495]">:</span> A<span className="text-[#808495]">)</span>{" "}
                      <span className="text-[#ff6f3c]">-&gt;</span> A<span className="text-[#808495]">:</span>
                    </div>
                    <div className="text-[#21c354]">{'        "Add contant to the argument"'}</div>
                    <div>
                      {"        "}
                      <span className="text-[#5b8def]">return</span> <span className="text-[#29b5a8]">5</span>{" "}
                      <span className="text-[#ff6f3c]">+</span> a
                    </div>
                  </div>
                </div>
                <p className="mt-[23px] text-[18.700px] leading-[28px]">Function f(x)</p>
                <Chart />
              </main>
            </div>
            {/* overlay scrollbar */}
            <div className="absolute right-0 top-[299px] h-[508px] w-[7px] rounded-t bg-[#a9a9ae]" />
          </div>
          <div className="h-[5px] shrink-0" />
        </div>

        {/* edge side panel */}
        <div className="flex w-[52px] shrink-0 flex-col items-center pb-[16px] pt-[5px]">
          {[<MagnifierColor />, <PriceTag />, <Toolbox />, <Chess />, <M365 />, <Outlook />, <SendPlane />].map((icon, i) => (
            <div key={i} className="flex h-[50px] items-center justify-center">{icon}</div>
          ))}
          <div className="mt-[16px] h-px w-[36px] bg-[#c4c4c4]" />
          <div className="mt-[24px] flex h-[32px] items-center"><Plus size={22} strokeWidth={1.2} color="#444" /></div>
          <div className="mt-auto h-px w-[36px] bg-[#c4c4c4]" />
          <div className="mt-[12px]"><Settings size={24} strokeWidth={1.3} color="#1c1c1c" /></div>
        </div>
      </div>

      {/* windows taskbar */}
      <div className="flex h-[60px] shrink-0 items-center border-t border-[#c9bbb4] bg-[linear-gradient(90deg,#eef0e2,#f1e4d9_30%,#efdcd3_60%,#f1e1dc_80%,#dcf0ee)] font-['Noto_Sans',sans-serif] text-[#1c1c1c]">
        <div className="ml-[29px]"><StartLogo /></div>
        <div className="ml-[17px] flex h-[38px] w-[273px] items-center rounded-full border border-[#d9cfc8] bg-[#fbf4ef] pl-[13px] text-[16.500px] text-[#555]">
          <Search size={21} strokeWidth={2} color="#1c1c1c" />
          <span className="ml-[11px] flex-1">Search</span>
          <SearchArt />
        </div>
        <div className="flex w-[58px] justify-center"><TaskView /></div>
        <div className="flex items-center">
          {taskbarApps.map((a, i) => (
            <div key={i} className="relative flex h-[48px] w-[55px] items-center justify-center">
              {a.icon}
              {a.pip && <span className="absolute bottom-0 h-[4px] w-[8px] rounded-full bg-[#7a7370]" />}
            </div>
          ))}
          <div className="relative ml-[4px] flex h-[48px] w-[48px] items-center justify-center rounded bg-[#f6ecea] shadow-[0_0_2px_rgba(0,0,0,0.15)]">
            <Edge />
            <span className="absolute bottom-[0px] h-[4px] w-[20px] rounded-full bg-[#22808f]" />
          </div>
          <div className="w-[3px]" />
          {pinnedApps.map((a, i) => (
            <div key={i} className="relative flex h-[48px] w-[55px] items-center justify-center">
              {a.icon}
              <span className="absolute bottom-0 h-[4px] w-[8px] rounded-full bg-[#7a7370]" />
            </div>
          ))}
        </div>
        <div className="ml-auto flex items-center">
          <ChevronUp size={22} strokeWidth={1.8} />
          <div className="ml-[8px] flex h-[50px] w-[40px] items-center justify-center rounded bg-[#1f6674]">
            <Mic size={23} color="#fff" strokeWidth={1.8} />
          </div>
          <div className="ml-[9px]"><TouchKeyboard /></div>
          <div className="ml-[10px] w-[58px] text-center text-[14.500px] leading-[20px]">
            <div>ENG</div>
            <div>IN</div>
          </div>
          <div className="ml-[8px]"><Wifi size={21} strokeWidth={1.5} /></div>
          <div className="ml-[7px]"><Volume2 size={21} strokeWidth={1.3} /></div>
          <div className="ml-[11px]"><Battery /></div>
          <div className="ml-[19px] text-right text-[14.500px] leading-[20px]">
            <div>19:41</div>
            <div>07-04-2024</div>
          </div>
          <div className="ml-[10px]"><Bell size={20} strokeWidth={1.3} /></div>
          <div className="relative ml-[22px] mr-[22px] mb-[4px]">
            <Copilot id="cpb" />
            <span className="absolute -bottom-[5px] left-[6px] rounded-[3px] bg-[#ffc20e] px-[2px] text-[9px] font-bold leading-[11px]">PRE</span>
          </div>
        </div>
      </div>
    </div>
  );
}
